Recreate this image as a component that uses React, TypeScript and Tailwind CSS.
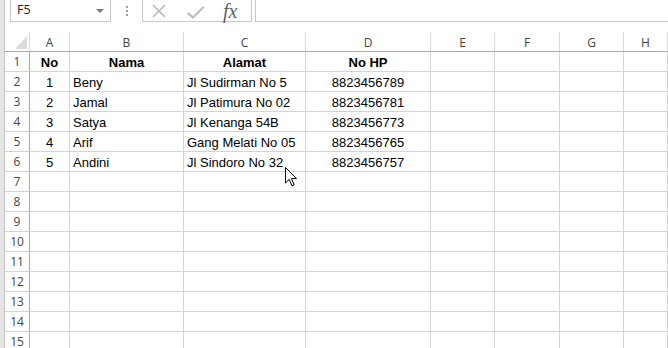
const cols = ["A", "B", "C", "D", "E", "F", "G", "H"];
const widths = ["w-[40px]", "w-[114px]", "w-[122px]", "w-[125px]", "w-[64px]", "w-[65px]", "w-[64px]", "flex-1"];

const rows: string[][] = [
  ["No", "Nama", "Alamat", "No HP"],
  ["1", "Beny", "Jl Sudirman No 5", "8823456789"],
  ["2", "Jamal", "Jl Patimura No 02", "8823456781"],
  ["3", "Satya", "Jl Kenanga 54B", "8823456773"],
  ["4", "Arif", "Gang Melati No 05", "8823456765"],
  ["5", "Andini", "Jl Sindoro No 32", "8823456757"],
];

function Cell({ r, c }: { r: number; c: number }) {
  const value = rows[r]?.[c] ?? "";
  const bold = r === 0;
  const centered = c === 0 || c === 3 || bold;
  return (
    <div
      className={`${widths[c]} h-[20px] shrink-0 border-r border-b border-[#d4d4d4] flex items-end pb-[2px] px-[3px] overflow-visible whitespace-nowrap text-[13px] leading-none text-black ${
        centered ? "justify-center" : "justify-start"
      } ${bold ? "font-bold" : ""}`}
    >
      {value}
    </div>
  );
}

export default function App() {
  return (
    <div className="relative w-[668px] h-[348px] overflow-hidden bg-white font-['Liberation_Sans',sans-serif]">
      <div className="flex h-full">
        <div className="w-[5px] h-full shrink-0 bg-[#e4e4e4] border-r border-[#c4c4c4]" />
        <div className="flex-1 flex flex-col">
          {/* formula bar */}
          <div className="h-[30px] shrink-0 flex items-start">
            <div className="ml-[5px] w-[101px] h-[22px] border-x border-b border-[#c6c6c6] flex items-center justify-between pl-[6px] pr-[6px] text-[13px] text-[#222] font-['Open_Sans',sans-serif]">
              <span className="text-[12.5px]">F5</span>
              <svg width="8" height="4" viewBox="0 0 8 4">
                <path d="M0 0 L8 0 L4 4 Z" fill="#7a7a7a" />
              </svg>
            </div>
            <div className="w-[31px] h-[22px] flex flex-col items-center justify-center gap-[2px]">
              <span className="w-[2px] h-[2px] bg-[#a0a0a0]" />
              <span className="w-[2px] h-[2px] bg-[#a0a0a0]" />
              <span className="w-[2px] h-[2px] bg-[#a0a0a0]" />
            </div>
            <div className="w-[110px] h-[22px] border-x border-b border-[#c6c6c6] flex items-center pl-[8px] gap-[20px]">
              <svg width="16" height="16" viewBox="0 0 16 16">
                <path d="M2 2 L14 14 M14 2 L2 14" stroke="#b8b8b8" strokeWidth="1.6" fill="none" />
              </svg>
              <svg width="18" height="16" viewBox="0 0 18 16">
                <path d="M1 9 L6 13 L16 3 L17.5 4.5 L6 16 L0 11 Z" fill="#bdbdbd" />
              </svg>
              <span className="font-['Liberation_Serif',serif] italic text-[20px] leading-[20px] text-[#5e5e5e] -ml-[2px]">
                fx
              </span>
            </div>
            <div className="ml-[3px] flex-1 h-[22px] border-l border-b border-[#c6c6c6]" />
          </div>

          {/* column headers */}
          <div className="flex h-[22px] shrink-0 border-b border-[#ababab] font-['Open_Sans',sans-serif] text-[12px] text-[#444]">
            <div className="w-[25px] shrink-0 flex items-end">
              <div className="w-full h-[19px] border-r border-[#dadada] flex items-end justify-end pr-[2px] pb-[2px]">
                <svg width="12" height="13" viewBox="0 0 12 13">
                  <path d="M12 0 L12 13 L0 13 Z" fill="#dcdcdc" />
                </svg>
              </div>
            </div>
            {cols.map((c, i) => (
              <div key={c} className={`${widths[i]} shrink-0 flex items-end`}>
                <div className="w-full h-[19px] pt-[2px] border-r border-[#dadada] flex items-center justify-center">
                  {c}
                </div>
              </div>
            ))}
          </div>

          {/* rows */}
          {Array.from({ length: 15 }, (_, r) => (
            <div key={r} className="flex shrink-0">
              <div className="w-[25px] h-[20px] shrink-0 border-r border-b border-r-[#a8a8a8] border-b-[#d4d4d4] flex items-center justify-center pt-[1px] font-['Open_Sans',sans-serif] text-[12px] text-[#444]">
                {r + 1}
              </div>
              {cols.map((c, i) => (
                <Cell key={c} r={r} c={i} />
              ))}
            </div>
          ))}
        </div>
      </div>

      {/* mouse cursor */}
      <svg className="absolute left-[285px] top-[167px]" width="13" height="20" viewBox="0 0 13 20">
        <path d="M0.5 0.5 L0.5 16 L4.2 12.4 L7 18.8 L9.2 17.8 L6.5 11.6 L11.5 11.6 Z" fill="#fff" stroke="#000" strokeWidth="1" />
      </svg>
    </div>
  );
}
